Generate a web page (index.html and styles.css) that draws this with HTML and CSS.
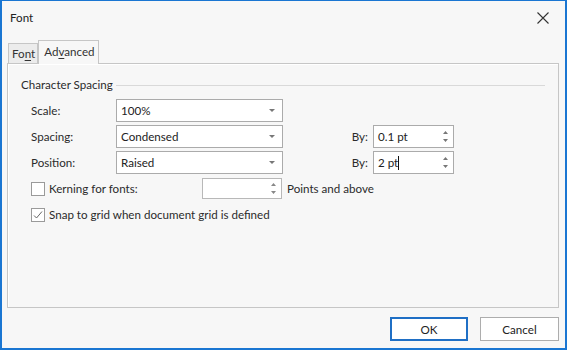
FILE: index.html
```html
<!DOCTYPE html>
<html lang="en">
<head>
    <meta charset="UTF-8">
    <title>Font</title>
    <link rel="stylesheet" href="styles.css">
</head>
<body>
    <div class="window">
        <div class="titlebar">
            <span class="title">Font</span>
            <span class="close">
                <svg width="12" height="12" viewBox="0 0 12 12"><path d="M0.5 0.5 L11.5 11.5 M11.5 0.5 L0.5 11.5" stroke="#333" stroke-width="1.1" fill="none"/></svg>
            </span>
        </div>
        <div class="tabs">
            <div class="tab">Fo<u>n</u>t</div>
            <div class="tab active">Ad<u>v</u>anced</div>
        </div>
        <div class="page">
            <div class="group-title"><span>Character Spacing</span><span class="rule"></span></div>
            <div class="rows">
                <div class="row">
                    <span class="label">Scale:</span>
                    <div class="combo"><span>100%</span><span class="drop"></span></div>
                </div>
                <div class="row">
                    <span class="label">Spacing:</span>
                    <div class="combo"><span>Condensed</span><span class="drop"></span></div>
                    <span class="by">By:</span>
                    <div class="spin wide"><span>0.1 pt</span><span class="arrows"><svg width="7" height="13" viewBox="0 0 7 13"><path d="M1 4 L3.5 1 L6 4 Z M1 9 L3.5 12 L6 9 Z" fill="#777"/></svg></span></div>
                </div>
                <div class="row">
                    <span class="label">Position:</span>
                    <div class="combo"><span>Raised</span><span class="drop"></span></div>
                    <span class="by">By:</span>
                    <div class="spin wide"><span>2 pt<span class="caret"></span></span><span class="arrows"><svg width="7" height="13" viewBox="0 0 7 13"><path d="M1 4 L3.5 1 L6 4 Z M1 9 L3.5 12 L6 9 Z" fill="#777"/></svg></span></div>
                </div>
                <div class="row">
                    <label class="check kern"><span class="box"></span>Kerning for fonts:</label>
                    <div class="spin small"><span></span><span class="arrows"><svg width="7" height="13" viewBox="0 0 7 13"><path d="M1 4 L3.5 1 L6 4 Z M1 9 L3.5 12 L6 9 Z" fill="#888"/></svg></span></div>
                    <span class="after">Points and above</span>
                </div>
                <div class="row">
                    <label class="check"><span class="box"><svg width="12" height="12" viewBox="0 0 12 12"><path d="M2 6.5 L4.5 9 L10 2.5" stroke="#666" stroke-width="1" fill="none"/></svg></span>Snap to grid when document grid is defined</label>
                </div>
            </div>
        </div>
        <div class="footer">
            <div class="btn primary">OK</div>
            <div class="btn">Cancel</div>
        </div>
    </div>
</body>
</html>
```

FILE: styles.css
```css
body {
    margin: 0;
    font-family: Lato, "Noto Sans", sans-serif;
    font-size: 11.6px;
    color: #2b2b2b;
}
.window {
    width: 567px;
    height: 350px;
    box-sizing: border-box;
    border: 2px solid #1a76d2;
    border-top-width: 1px;
    background: #f7f7f7;
    display: flex;
    flex-direction: column;
}
.titlebar {
    height: 33px;
    display: flex;
    align-items: center;
    justify-content: space-between;
    padding: 0 16px 0 8px;
}
.title {
    color: #222;
}
.close svg {
    display: block;
}
.tabs {
    margin: 6px 0 0 6px;
    height: 23px;
    display: flex;
    align-items: flex-end;
}
.tab {
    height: 19px;
    line-height: 19px;
    padding: 0 2px 0 3px;
    border: 1px solid #c6c6c6;
    border-bottom: none;
    background: #ececec;
    color: #333;
}
.tab.active {
    height: 23px;
    line-height: 22px;
    margin-bottom: -1px;
    padding: 0 3px 0 5px;
    background: #f7f7f7;
    position: relative;
    z-index: 1;
}
.tab u {
    text-decoration-thickness: 1px;
    text-underline-offset: 2px;
}
.page {
    height: 245px;
    box-sizing: border-box;
    margin: 0 6px 0 5px;
    border: 1px solid #c6c6c6;
    box-shadow: inset 1px 1px 0 #fff;
    padding: 13px 13px 0 13px;
}
.group-title {
    display: flex;
    align-items: center;
    height: 16px;
    line-height: 16px;
}
.rule {
    flex: 1;
    height: 0;
    border-top: 1px solid #d9d9d9;
    margin-left: 3px;
}
.rows {
    margin: 6px 0 0 10px;
}
.row {
    display: flex;
    align-items: center;
    height: 23px;
    margin-bottom: 3px;
}
.label {
    width: 85px;
}
.combo, .spin {
    height: 23px;
    box-sizing: border-box;
    border: 1px solid #ababab;
    background: #fff;
    display: flex;
    align-items: center;
    justify-content: space-between;
    padding: 0 4px 0 4px;
    color: #222;
}
.combo {
    width: 167px;
    padding-right: 7px;
}
.drop {
    width: 0;
    height: 0;
    border-left: 3px solid transparent;
    border-right: 3px solid transparent;
    border-top: 3px solid #777;
}
.by {
    width: 85px;
    text-align: right;
    padding-right: 5px;
}
.spin.wide {
    width: 81px;
}
.spin.small {
    width: 80px;
    height: 21px;
    border-color: #b8b8b8;
}
.arrows svg {
    display: block;
}
.caret {
    display: inline-block;
    width: 1px;
    height: 14px;
    background: #111;
    vertical-align: -3px;
}
.check {
    display: flex;
    align-items: center;
}
.check.kern {
    width: 171px;
}
.box {
    width: 14px;
    height: 14px;
    box-sizing: border-box;
    border: 1px solid #9a9a9a;
    background: #fff;
    margin-right: 4px;
    display: flex;
    align-items: center;
    justify-content: center;
}
.after {
    margin-left: 5px;
}
.footer {
    display: flex;
    justify-content: flex-end;
    gap: 12px;
    padding: 9px 6px 0 0;
}
.btn {
    width: 79px;
    height: 24px;
    box-sizing: border-box;
    border: 1px solid #adadad;
    background: #fff;
    display: flex;
    align-items: center;
    justify-content: center;
    color: #222;
}
.btn.primary {
    border: 2px solid #1f6fc5;
    width: 78px;
}
```
